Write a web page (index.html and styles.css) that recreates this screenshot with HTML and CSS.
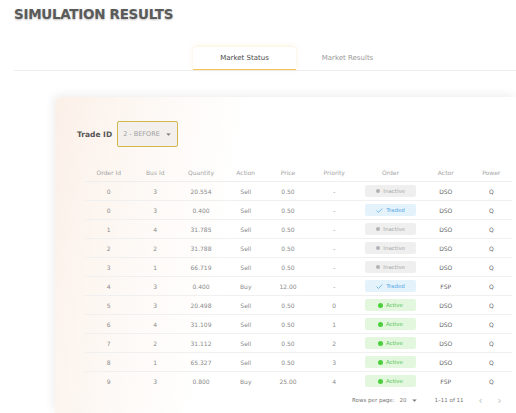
FILE: index.html
```html
<!DOCTYPE html>
<html lang="en">
<head>
    <meta charset="UTF-8">
    <meta name="viewport" content="width=device-width, initial-scale=1.0">
    <title>Simulation Results</title>
    <link rel="stylesheet" href="styles.css">
</head>
<body>
    <h1 class="title">SIMULATION RESULTS</h1>

    <div class="tabs">
        <div class="tab active">Market Status</div>
        <div class="tab">Market Results</div>
    </div>

    <div class="card">
        <div class="trade">
            <span class="trade-label">Trade ID</span>
            <div class="select">
                <span>2 - BEFORE</span>
                <svg width="5" height="3" viewBox="0 0 6 4"><path d="M0 0.5h6L3 3.5z" fill="#777"/></svg>
            </div>
        </div>

        <table class="orders">
            <thead>
                <tr>
                    <th>Order Id</th>
                    <th>Bus Id</th>
                    <th>Quantity</th>
                    <th>Action</th>
                    <th>Price</th>
                    <th>Priority</th>
                    <th>Order</th>
                    <th>Actor</th>
                    <th>Power</th>
                </tr>
            </thead>
            <tbody>
                <tr><td>0</td><td>3</td><td>20.554</td><td>Sell</td><td>0.50</td><td>-</td><td><span class="badge inactive"><i class="dot"></i>Inactive</span></td><td class="dark">DSO</td><td class="dark">Q</td></tr>
                <tr><td>0</td><td>3</td><td>0.400</td><td>Sell</td><td>0.50</td><td>-</td><td><span class="badge traded"><svg width="7" height="5" viewBox="0 0 7 5"><path d="M0.6 2.6l1.8 1.8L6.4 0.5" fill="none" stroke="#5aa9e6" stroke-width="0.8"/></svg>Traded</span></td><td class="dark">DSO</td><td class="dark">Q</td></tr>
                <tr><td>1</td><td>4</td><td>31.785</td><td>Sell</td><td>0.50</td><td>-</td><td><span class="badge inactive"><i class="dot"></i>Inactive</span></td><td class="dark">DSO</td><td class="dark">Q</td></tr>
                <tr><td>2</td><td>2</td><td>31.788</td><td>Sell</td><td>0.50</td><td>-</td><td><span class="badge inactive"><i class="dot"></i>Inactive</span></td><td class="dark">DSO</td><td class="dark">Q</td></tr>
                <tr><td>3</td><td>1</td><td>66.719</td><td>Sell</td><td>0.50</td><td>-</td><td><span class="badge inactive"><i class="dot"></i>Inactive</span></td><td class="dark">DSO</td><td class="dark">Q</td></tr>
                <tr><td>4</td><td>3</td><td>0.400</td><td>Buy</td><td>12.00</td><td>-</td><td><span class="badge traded"><svg width="7" height="5" viewBox="0 0 7 5"><path d="M0.6 2.6l1.8 1.8L6.4 0.5" fill="none" stroke="#5aa9e6" stroke-width="0.8"/></svg>Traded</span></td><td class="dark">FSP</td><td class="dark">Q</td></tr>
                <tr><td>5</td><td>3</td><td>20.498</td><td>Sell</td><td>0.50</td><td>0</td><td><span class="badge active"><i class="dot"></i>Active</span></td><td class="dark">DSO</td><td class="dark">Q</td></tr>
                <tr><td>6</td><td>4</td><td>31.109</td><td>Sell</td><td>0.50</td><td>1</td><td><span class="badge active"><i class="dot"></i>Active</span></td><td class="dark">DSO</td><td class="dark">Q</td></tr>
                <tr><td>7</td><td>2</td><td>31.112</td><td>Sell</td><td>0.50</td><td>2</td><td><span class="badge active"><i class="dot"></i>Active</span></td><td class="dark">DSO</td><td class="dark">Q</td></tr>
                <tr><td>8</td><td>1</td><td>65.327</td><td>Sell</td><td>0.50</td><td>3</td><td><span class="badge active"><i class="dot"></i>Active</span></td><td class="dark">DSO</td><td class="dark">Q</td></tr>
                <tr><td>9</td><td>3</td><td>0.800</td><td>Buy</td><td>25.00</td><td>4</td><td><span class="badge active"><i class="dot"></i>Active</span></td><td class="dark">FSP</td><td class="dark">Q</td></tr>
            </tbody>
        </table>

        <div class="pager">
            <span>Rows per page:</span>
            <span class="per-page">20 <svg width="5" height="3" viewBox="0 0 6 4"><path d="M0 0.5h6L3 3.5z" fill="#777"/></svg></span>
            <span class="range">1–11 of 11</span>
            <span class="nav">&lsaquo;</span>
            <span class="nav">&rsaquo;</span>
        </div>
    </div>
</body>
</html>
```

FILE: styles.css
```css
html, body {
    margin: 0;
    padding: 0;
    overflow: hidden;
}
body {
    font-family: "DejaVu Sans", sans-serif;
    background-color: #fff;
    color: #555;
    width: 516px;
    height: 413px;
}
.title {
    margin: 0;
    padding: 6px 0 0 14px;
    font-size: 13.5px;
    line-height: 17px;
    font-weight: 800;
    color: #5a5a5a;
    letter-spacing: -0.3px;
    text-shadow: 0 1px 2px rgba(0,0,0,0.25);
}
.tabs {
    display: flex;
    margin: 24px 0 0 14px;
    padding-left: 179px;
    border-bottom: 1px solid #eee;
}
.tab {
    width: 103px;
    height: 22px;
    line-height: 22px;
    text-align: center;
    font-size: 7px;
    color: #9a9a9a;
}
.tab.active {
    color: #4a4a4a;
    background-color: #fff;
    border-radius: 4px 4px 0 0;
    border-bottom: 1.5px solid #f4c35c;
    box-shadow: 0 -1px 4px rgba(245,195,92,0.25);
}
.card {
    margin: 26px 0 0 55px;
    width: 439px;
    height: 292px;
    padding: 24px 0 0 22px;
    border-radius: 6px 0 0 0;
    background: linear-gradient(100deg, #fbf0e8 0%, #fdf8f4 18%, #fff 38%);
    box-shadow: -2px -2px 10px rgba(0,0,0,0.07);
}
.trade {
    display: flex;
    align-items: center;
    gap: 5px;
}
.trade-label {
    font-size: 7.5px;
    font-weight: bold;
    color: #555;
}
.select {
    display: flex;
    align-items: center;
    justify-content: space-between;
    box-sizing: border-box;
    width: 61px;
    height: 26px;
    padding: 0 6px 0 5px;
    border: 1.5px solid #d2b84a;
    border-radius: 2px;
    background-color: #f2efed;
    font-size: 6.5px;
    color: #a0a0a0;
}
.orders {
    margin: 16px 0 0 8px;
    width: 427px;
    table-layout: fixed;
    border-collapse: collapse;
}
.orders th {
    height: 18px;
    padding: 0;
    font-size: 6px;
    font-weight: normal;
    color: #a5a5a5;
    border-bottom: 1px solid #eee;
}
.orders th:nth-child(1) { width: 47.5px; }
.orders th:nth-child(2) { width: 45.5px; }
.orders th:nth-child(3) { width: 46px; }
.orders th:nth-child(4) { width: 43.5px; }
.orders th:nth-child(5) { width: 41px; }
.orders th:nth-child(6) { width: 51.5px; }
.orders th:nth-child(7) { width: 61px; }
.orders th:nth-child(8) { width: 49.5px; }
.orders th:nth-child(9) { width: 41.5px; }
.orders td {
    height: 18px;
    padding: 0;
    text-align: center;
    font-size: 6px;
    color: #8a8a8a;
    border-bottom: 1px solid #f0f0f0;
}
.orders tbody tr:last-child td {
    border-bottom: none;
}
.orders td.dark {
    color: #666;
}
.badge {
    display: inline-flex;
    align-items: center;
    justify-content: center;
    gap: 3px;
    width: 51px;
    height: 12px;
    border-radius: 2px;
    font-size: 5.5px;
    vertical-align: middle;
}
.badge .dot {
    display: block;
    width: 4.5px;
    height: 4.5px;
    border-radius: 50%;
}
.badge.inactive {
    background-color: #efefef;
    color: #aaa;
}
.badge.inactive .dot {
    background-color: #b3b3b3;
}
.badge.traded {
    background-color: #e4f2fc;
    color: #5aa9e6;
}
.badge.active {
    background-color: #e2f7de;
    color: #5cc75a;
}
.badge.active .dot {
    width: 5px;
    height: 5px;
    background-color: #4ccf3c;
}
.pager {
    display: flex;
    align-items: center;
    height: 20px;
    padding-left: 275px;
    font-size: 5.5px;
    color: #777;
}
.per-page {
    display: flex;
    align-items: center;
    gap: 5px;
    margin-left: 5px;
}
.range {
    margin-left: 18px;
}
.nav {
    font-size: 10px;
    color: #bbb;
    margin-left: 15px;
}
```
